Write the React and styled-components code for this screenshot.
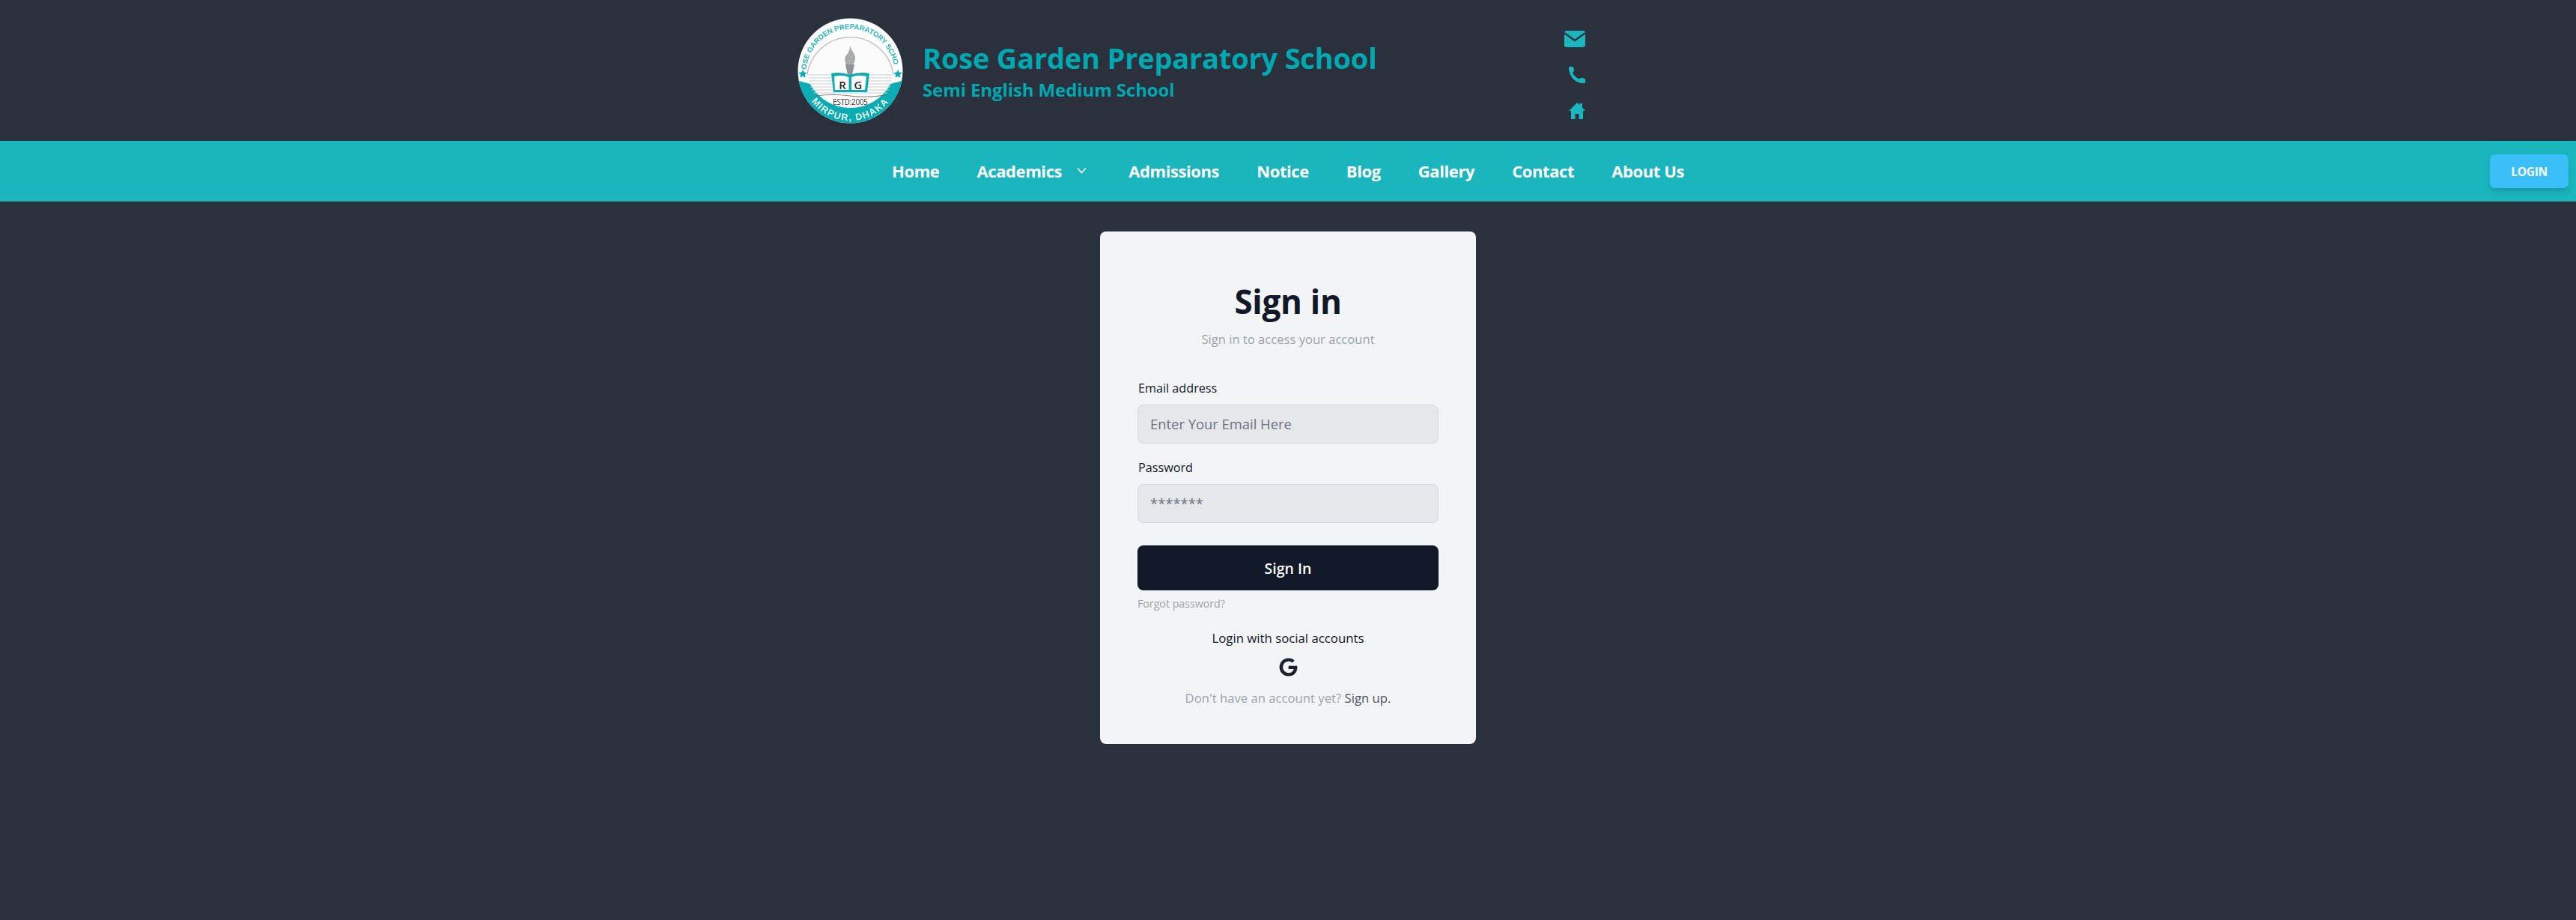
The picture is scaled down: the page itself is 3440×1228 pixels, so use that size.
import React from "react";
import styled, { createGlobalStyle } from "styled-components";
import { FaGoogle } from "react-icons/fa";

const font = `"Open Sans", "Noto Sans", "Liberation Sans", sans-serif`;

const GlobalStyle = createGlobalStyle`
  html, body {
    margin: 0;
    background: #2a303c;
    font-family: ${font};
  }
  * { box-sizing: border-box; }
`;

const Page = styled.div`
  min-height: 1228px;
  background: #2a303c;
  overflow: hidden;
`;

const Header = styled.header`
  height: 188px;
  display: flex;
  align-items: center;
  padding-left: 1065px;
`;

const Brand = styled.div`
  width: 1024px;
  display: flex;
  align-items: center;
  gap: 26px;
`;

const Logo = styled.svg`
  width: 141px;
  height: 141px;
  display: block;
  flex: none;
  filter: blur(0.4px);
`;

const BrandText = styled.div`
  display: flex;
  flex-direction: column;
  color: #00a9b1;
  margin-top: -3px;
`;

const Title = styled.h1`
  margin: 0;
  font-size: 38px;
  line-height: 54px;
  font-weight: 700;
  letter-spacing: -0.2px;
  white-space: nowrap;
`;

const Subtitle = styled.h2`
  margin: 1px 0 0;
  font-size: 24px;
  line-height: 30px;
  font-weight: 700;
  letter-spacing: -0.1px;
  white-space: nowrap;
`;

const Contacts = styled.div`
  width: 28px;
  display: flex;
  flex-direction: column;
  align-items: flex-end;
  gap: 26px;
  margin-top: 12px;
`;

const ContactIcon = styled.svg`
  display: block;
  width: ${(p) => p.$w}px;
  height: 22px;
  fill: #1ab7bf;
`;

const NavBar = styled.nav`
  position: relative;
  height: 81px;
  padding-bottom: 2px;
  background: #1ab5bd;
  display: flex;
  align-items: center;
  justify-content: center;
  gap: 50px;
`;

const NavLink = styled.a`
  display: flex;
  align-items: center;
  gap: 20px;
  color: #fff;
  font-size: 22px;
  line-height: 30px;
  font-weight: 700;
  letter-spacing: -0.4px;
  white-space: nowrap;
`;

const Chevron = styled.svg`
  width: 13px;
  height: 9px;
  margin-right: 6px;
  fill: none;
  stroke: #fff;
  stroke-width: 1.6;
`;

const LoginButton = styled.button`
  position: absolute;
  right: 10px;
  top: 18px;
  width: 105px;
  height: 45px;
  border: none;
  border-radius: 7px;
  background: #3abff8;
  color: #fff;
  font-family: ${font};
  font-size: 15.5px;
  font-weight: 700;
  letter-spacing: -0.3px;
  box-shadow: 0 6px 10px -3px rgba(20, 80, 110, 0.35);
`;

const Main = styled.main`
  display: flex;
  justify-content: center;
  padding-top: 40px;
`;

const Card = styled.div`
  width: 502px;
  height: 684px;
  background: #f3f4f6;
  border-radius: 8px;
  padding: 0 50px;
  display: flex;
  flex-direction: column;
`;

const Heading = styled.h1`
  margin: 62px 0 0;
  text-align: center;
  color: #111827;
  font-size: 44px;
  line-height: 62px;
  font-weight: 700;
  letter-spacing: -0.3px;
`;

const Lead = styled.p`
  margin: 7px 0 0;
  text-align: center;
  color: #9ca3af;
  font-size: 16.6px;
  line-height: 26px;
`;

const Field = styled.div`
  display: flex;
  flex-direction: column;
  margin-top: ${(p) => p.$top}px;
`;

const Label = styled.label`
  color: #111827;
  font-size: 16.2px;
  line-height: 26px;
  margin: 0 0 9px 1px;
`;

const Input = styled.input`
  width: 402px;
  height: 52px;
  border: 1.5px solid #d1d5db;
  border-radius: 8px;
  background: #e5e7eb;
  padding: 0 16px 2px;
  font-family: ${font};
  font-size: 18.4px;
  outline: none;
  &::placeholder {
    color: #6b7280;
    opacity: 1;
  }
`;

const Submit = styled.button`
  margin-top: 30px;
  width: 402px;
  height: 60px;
  border: none;
  border-radius: 8px;
  background: #111827;
  color: #fff;
  font-family: ${font};
  font-size: 19.5px;
  font-weight: 600;
`;

const Forgot = styled.a`
  margin-top: 7px;
  color: #9ca3af;
  font-size: 14.2px;
  line-height: 22px;
`;

const Social = styled.p`
  margin: 22px 0 0;
  text-align: center;
  color: #111827;
  font-size: 16.8px;
  line-height: 26px;
`;

const GoogleRow = styled.div`
  display: flex;
  justify-content: center;
  margin-top: 13px;
  color: #1a2230;
  font-size: 25px;
  line-height: 25px;
  svg {
    display: block;
  }
`;

const SignUp = styled.p`
  margin: 15px 0 0;
  text-align: center;
  color: #9ca3af;
  font-size: 16.7px;
  line-height: 28px;
  span {
    color: #4b5563;
  }
`;

function SchoolLogo() {
  return (
    <Logo viewBox="0 0 141 141" role="img" aria-label="Rose Garden Preparatory School">
      <defs>
        <path id="logoTop" d="M12 66 A59 59 0 0 1 129 66" />
        <path id="logoBottom" d="M20 113 A65 65 0 0 0 121 113" />
      </defs>
      <circle cx="70.5" cy="70.5" r="70" fill="#ffffff" />
      <path d="M1.8 84 L16.8 88 A61 61 0 0 0 124.2 88 L139.2 84 A70 70 0 0 1 1.8 84 Z" fill="#0cacb4" />
      <path d="M13 76 A58 58 0 0 1 128 76" fill="#fbfbfb" stroke="#b8babc" strokeWidth="1.2" />
      <g stroke="#c8cacc" strokeWidth="1">
        <path d="M15 76 H126 M15 80 H126 M16 84 H125 M16 88 H125 M17 92 H124 M19 96 H122 M21 100 H120" />
      </g>
      <path d="M24 104 Q48 101 70 104 T117 103" stroke="#777" strokeWidth="1.1" fill="none" />
      <path d="M70 37 C72 44 78 48 77 55 C76 60 74 62 73 64 L67 64 C63 60 62 54 65 50 C67 47 70 44 70 37 Z" fill="#a9abad" />
      <path d="M64 62 H76 L73 76 H67 Z" fill="#8f9294" />
      <path d="M45 74 Q57 71 70 76 Q83 71 96 74 L93 99 H48 Z" fill="#0cacb4" />
      <path d="M49 78 Q59 75 68.5 79 V96 H50 Z M72 79 Q81 75 92 78 L90 96 H72 Z" fill="#ffffff" />
      <text x="60" y="95" textAnchor="middle" fontSize="15" fontWeight="600" fill="#222" fontFamily="Open Sans, sans-serif">R</text>
      <text x="81" y="95" textAnchor="middle" fontSize="15" fontWeight="600" fill="#222" fontFamily="Open Sans, sans-serif">G</text>
      <text x="70.5" y="116" textAnchor="middle" fontSize="10" fill="#333" fontFamily="Open Sans, sans-serif" letterSpacing="-0.3">ESTD:2005</text>
      <text fontSize="9.6" fontWeight="700" fill="#27b4bb" fontFamily="Liberation Sans, sans-serif">
        <textPath href="#logoTop" startOffset="50%" textAnchor="middle">ROSE GARDEN PREPARATORY SCHOOL</textPath>
      </text>
      <text fontSize="12.5" fontWeight="700" fill="#eefcfc" fontFamily="Liberation Sans, sans-serif" letterSpacing="1.4">
        <textPath href="#logoBottom" startOffset="50%" textAnchor="middle">MIRPUR, DHAKA</textPath>
      </text>
      <path d="M7 69 l1.8 3.6 3.9.5-2.8 2.7.7 3.9-3.6-1.9-3.5 1.9.7-3.9-2.8-2.7 3.9-.5z" fill="#0cacb4" />
      <path d="M134 69 l1.8 3.6 3.9.5-2.8 2.7.7 3.9-3.6-1.9-3.5 1.9.7-3.9-2.8-2.7 3.9-.5z" fill="#0cacb4" />
    </Logo>
  );
}

const navItems = ["Home", "Academics", "Admissions", "Notice", "Blog", "Gallery", "Contact", "About Us"];

export default function App() {
  return (
    <Page>
      <GlobalStyle />
      <Header>
        <Brand>
          <SchoolLogo />
          <BrandText>
            <Title>Rose Garden Preparatory School</Title>
            <Subtitle>Semi English Medium School</Subtitle>
          </BrandText>
        </Brand>
        <Contacts>
          <ContactIcon $w={28} viewBox="0 0 28 22">
            <path d="M3 0 H25 Q28 0 28 3 V19 Q28 22 25 22 H3 Q0 22 0 19 V3 Q0 0 3 0 Z" />
            <path d="M0 3 L14 13 L28 3" fill="none" stroke="#2a303c" strokeWidth="2.4" />
          </ContactIcon>
          <ContactIcon $w={22} viewBox="0 0 22 22">
            <path d="M0 1 Q0 0 1 0 H5 Q6 0 6.2 1 L7 5 Q7 6 6.2 6.7 L5 8 C6.5 11.5 10 15 14 16.5 L15.2 15.3 Q16 14.6 17 14.8 L21 15.8 Q22 16 22 17 V22 H19 C8 22 0 12 0 1 Z" />
          </ContactIcon>
          <ContactIcon $w={22} viewBox="0 0 22 22">
            <path d="M11 0 L14.5 3 V1 H18 V6.5 L22 11 H19 V22 H13.5 V15 H8.5 V22 H3 V11 H0 Z" />
          </ContactIcon>
        </Contacts>
      </Header>
      <NavBar>
        {navItems.map((item) => (
          <NavLink key={item}>
            {item}
            {item === "Academics" && (
              <Chevron viewBox="0 0 13 9">
                <path d="M1 1.5 L6.5 7.5 L12 1.5" />
              </Chevron>
            )}
          </NavLink>
        ))}
        <LoginButton>LOGIN</LoginButton>
      </NavBar>
      <Main>
        <Card>
          <Heading>Sign in</Heading>
          <Lead>Sign in to access your account</Lead>
          <Field $top={39}>
            <Label>Email address</Label>
            <Input placeholder="Enter Your Email Here" />
          </Field>
          <Field $top={19}>
            <Label>Password</Label>
            <Input placeholder="*******" />
          </Field>
          <Submit>Sign In</Submit>
          <Forgot>Forgot password?</Forgot>
          <Social>Login with social accounts</Social>
          <GoogleRow>
            <FaGoogle />
          </GoogleRow>
          <SignUp>
            Don't have an account yet? <span>Sign up.</span>
          </SignUp>
        </Card>
      </Main>
    </Page>
  );
}
